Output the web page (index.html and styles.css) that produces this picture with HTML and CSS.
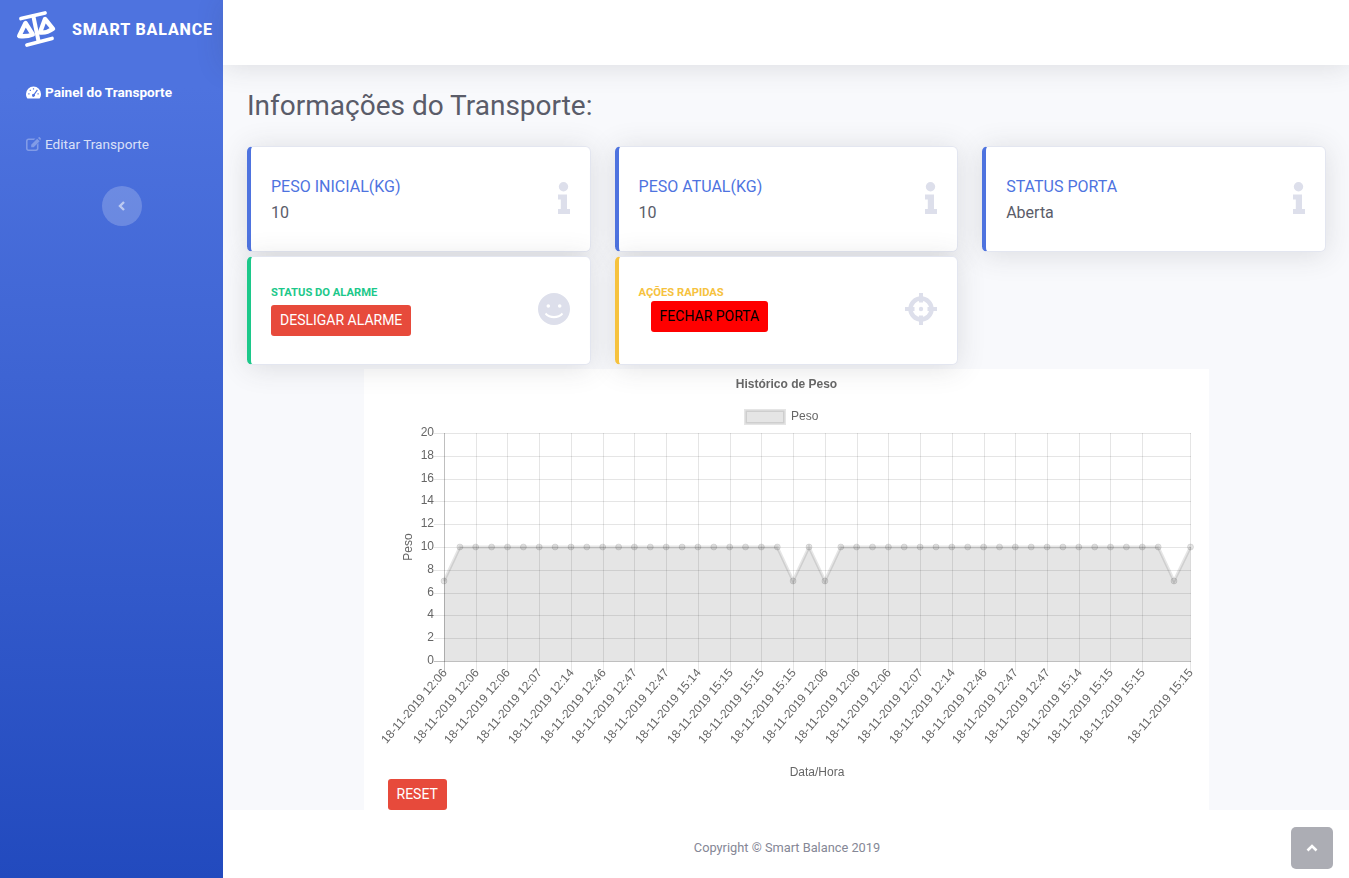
FILE: index.html
```html
<!DOCTYPE html>
<html lang="pt">
<head>
<meta charset="utf-8">
<title>Smart Balance</title>
<link rel="stylesheet" href="styles.css">
</head>
<body>
<aside class="sidebar">
  <a class="brand">
    <svg class="brand-logo" viewBox="16 11 41 38">
      <path class="logo-bar" d="M21 19.500 45 14M27 46 52 39.500"/>
      <path class="logo-stem" d="M33 15.500 38.500 42"/>
      <path class="logo-tri" d="M25.500 24 19.200 37Q27 37.800 32.800 35.500Z"/>
      <path class="logo-tri" d="M45 20 40 33.500Q47 34.200 53 29.800Z"/>
    </svg>
    <span class="brand-text">Smart Balance</span>
  </a>
  <nav class="nav">
    <a class="nav-link active">
      <svg class="nav-icon" viewBox="0 0 15 13"><path fill-rule="evenodd" d="M7.500 0.500A7.500 7.500 0 0 0 0 8C0 9.700 .5 11.200 1.400 12.500H13.600C14.500 11.200 15 9.700 15 8A7.500 7.500 0 0 0 7.500 .5ZM2.300 7.200H3.500V8.400H2.300ZM3.700 3.800H4.900V5H3.700ZM6.900 2.300H8.100V3.500H6.900ZM10.900 3.500 11.900 4.200 8.800 8.600A1.500 1.500 0 1 1 7.800 7.900ZM11.500 7.200H12.700V8.400H11.500Z"/></svg>
      <span>Painel do Transporte</span>
    </a>
    <a class="nav-link">
      <svg class="nav-icon" viewBox="0 0 15 14"><path d="M2.500 1.500H9.500L7.900 3.100H2.500C2 3.100 1.600 3.500 1.600 4V11.500C1.600 12 2 12.400 2.500 12.400H10C10.500 12.400 10.900 12 10.900 11.500V7.700L12.500 6.100V11.500C12.500 12.900 11.400 14 10 14H2.500C1.100 14 0 12.900 0 11.500V4C0 2.600 1.100 1.500 2.500 1.500ZM11.200 1.800 13.700 4.300 7.700 10.300H5.200V7.800ZM12 1 12.600.4C13 0 13.500 0 13.900.4L14.600 1.100C15 1.500 15 2 14.600 2.400L14.500 3.500Z"/></svg>
      <span>Editar Transporte</span>
    </a>
  </nav>
  <button class="toggle" type="button" aria-label="Recolher menu">
    <svg viewBox="0 0 8 10" class="toggle-icon"><path d="M6 1 2 5 6 9"/></svg>
  </button>
</aside>

<div class="main">
  <header class="topbar"></header>
  <main class="content">
    <h1 class="page-title">Informações do Transporte:</h1>
    <section class="cards">
      <article class="card primary">
        <div class="card-text">
          <div class="card-title">Peso Inicial(kg)</div>
          <div class="card-value">10</div>
        </div>
        <svg class="icon-info" viewBox="0 0 12 32"><circle cx="5.500" cy="4.700" r="4.700"/><path d="M0 12.500H9V27H12V32H0V27H2.800V17.500H0Z"/></svg>
      </article>
      <article class="card primary">
        <div class="card-text">
          <div class="card-title">Peso Atual(kg)</div>
          <div class="card-value">10</div>
        </div>
        <svg class="icon-info" viewBox="0 0 12 32"><circle cx="5.500" cy="4.700" r="4.700"/><path d="M0 12.500H9V27H12V32H0V27H2.800V17.500H0Z"/></svg>
      </article>
      <article class="card primary">
        <div class="card-text">
          <div class="card-title">Status Porta</div>
          <div class="card-value">Aberta</div>
        </div>
        <svg class="icon-info" viewBox="0 0 12 32"><circle cx="5.500" cy="4.700" r="4.700"/><path d="M0 12.500H9V27H12V32H0V27H2.800V17.500H0Z"/></svg>
      </article>
      <article class="card success tall">
        <div class="card-text">
          <div class="card-label green">Status do Alarme</div>
          <button class="btn btn-danger alarm-btn" type="button">Desligar Alarme</button>
        </div>
        <svg class="icon-round" viewBox="0 0 32 32"><path fill-rule="evenodd" d="M16 0A16 16 0 1 0 16 32 16 16 0 0 0 16 0ZM10.300 11.200A1.800 1.800 0 1 1 10.300 14.800 1.800 1.800 0 0 1 10.300 11.200ZM21.700 11.200A1.800 1.800 0 1 1 21.700 14.800 1.800 1.800 0 0 1 21.700 11.200ZM8.200 19.700C10 21.800 13 23 16 23S22 21.800 23.800 19.700L25.200 21.200C23 23.800 19.500 25.200 16 25.200S9 23.800 6.800 21.200Z"/></svg>
      </article>
      <article class="card warning tall">
        <div class="card-text">
          <div class="card-label yellow">Ações Rapidas</div>
          <button class="btn door-btn" type="button">Fechar Porta</button>
        </div>
        <svg class="icon-round" viewBox="0 0 32 32"><path class="cross" d="M16 0V9.500M16 22.500V32M0 16H9.500M22.500 16H32"/><circle class="ring" cx="16" cy="16" r="10.500"/><circle cx="16" cy="16" r="2.200"/></svg>
      </article>
    </section>
    <section class="chart-box">
      <svg class="chart" viewBox="364 369 845 410">
        <text class="chart-title" x="786.500" y="388" text-anchor="middle">Histórico de Peso</text>
        <rect class="legend-box" x="745.500" y="410.500" width="39" height="13"/>
        <text class="chart-text" x="791" y="420">Peso</text>

        <path class="grid" d="M434 433.500H1191M434 456.500H1191M434 479.500H1191M434 501.500H1191M434 524.500H1191M434 547.500H1191M434 570.500H1191M434 593.500H1191M434 615.500H1191M434 638.500H1191"/>
        <path class="grid" d="M476.500 433V671M507.500 433V671M539.500 433V671M571.500 433V671M603.500 433V671M634.500 433V671M666.500 433V671M698.500 433V671M730.500 433V671M761.500 433V671M793.500 433V671M825.500 433V671M857.500 433V671M888.500 433V671M920.500 433V671M952.500 433V671M984.500 433V671M1015.500 433V671M1047.500 433V671M1079.500 433V671M1110.500 433V671M1142.500 433V671M1190.500 433V671"/>
        <path class="axis" d="M444.500 433V671M434 661.500H1191"/>

        <path class="area" d="M444 581 459.900 547H777.300L793.100 581 809 547 824.900 581 840.800 547H1158.200L1174 581 1190.500 547V661H444Z"/>
        <path class="line" d="M444 581 459.900 547H777.300L793.100 581 809 547 824.900 581 840.800 547H1158.200L1174 581 1190.500 547"/>
        <g class="points">
          <circle cx="444" cy="581" r="3"/><circle cx="459.900" cy="547" r="3"/><circle cx="475.700" cy="547" r="3"/><circle cx="491.600" cy="547" r="3"/><circle cx="507.500" cy="547" r="3"/><circle cx="523.400" cy="547" r="3"/><circle cx="539.200" cy="547" r="3"/><circle cx="555.100" cy="547" r="3"/>
          <circle cx="571" cy="547" r="3"/><circle cx="586.800" cy="547" r="3"/><circle cx="602.700" cy="547" r="3"/><circle cx="618.600" cy="547" r="3"/><circle cx="634.400" cy="547" r="3"/><circle cx="650.300" cy="547" r="3"/><circle cx="666.200" cy="547" r="3"/><circle cx="682.100" cy="547" r="3"/>
          <circle cx="697.900" cy="547" r="3"/><circle cx="713.800" cy="547" r="3"/><circle cx="729.700" cy="547" r="3"/><circle cx="745.500" cy="547" r="3"/><circle cx="761.400" cy="547" r="3"/><circle cx="777.300" cy="547" r="3"/><circle cx="793.100" cy="581" r="3"/><circle cx="809" cy="547" r="3"/>
          <circle cx="824.900" cy="581" r="3"/><circle cx="840.800" cy="547" r="3"/><circle cx="856.600" cy="547" r="3"/><circle cx="872.500" cy="547" r="3"/><circle cx="888.400" cy="547" r="3"/><circle cx="904.200" cy="547" r="3"/><circle cx="920.100" cy="547" r="3"/><circle cx="936" cy="547" r="3"/>
          <circle cx="951.800" cy="547" r="3"/><circle cx="967.700" cy="547" r="3"/><circle cx="983.600" cy="547" r="3"/><circle cx="999.500" cy="547" r="3"/><circle cx="1015.300" cy="547" r="3"/><circle cx="1031.200" cy="547" r="3"/><circle cx="1047.100" cy="547" r="3"/><circle cx="1062.900" cy="547" r="3"/>
          <circle cx="1078.800" cy="547" r="3"/><circle cx="1094.700" cy="547" r="3"/><circle cx="1110.500" cy="547" r="3"/><circle cx="1126.400" cy="547" r="3"/><circle cx="1142.300" cy="547" r="3"/><circle cx="1158.200" cy="547" r="3"/><circle cx="1174" cy="581" r="3"/><circle cx="1190.500" cy="547" r="3"/>
        </g>

        <g class="chart-text" text-anchor="end">
          <text x="434" y="436">20</text><text x="434" y="459">18</text><text x="434" y="482">16</text><text x="434" y="504">14</text><text x="434" y="527">12</text><text x="434" y="550">10</text><text x="434" y="573">8</text><text x="434" y="596">6</text><text x="434" y="618">4</text><text x="434" y="641">2</text><text x="434" y="664">0</text>
        </g>
        <text class="chart-text" x="412" y="547" text-anchor="middle" transform="rotate(-90 412 547)">Peso</text>
        <text class="chart-text" x="817" y="776" text-anchor="middle">Data/Hora</text>

        <g class="chart-text" text-anchor="end">
          <text transform="translate(447.500 673) rotate(-49.500)">18-11-2019 12:06</text>
          <text transform="translate(479.500 673) rotate(-49.500)">18-11-2019 12:06</text>
          <text transform="translate(510.500 673) rotate(-49.500)">18-11-2019 12:06</text>
          <text transform="translate(542.500 673) rotate(-49.500)">18-11-2019 12:07</text>
          <text transform="translate(574.500 673) rotate(-49.500)">18-11-2019 12:14</text>
          <text transform="translate(606.500 673) rotate(-49.500)">18-11-2019 12:46</text>
          <text transform="translate(637.500 673) rotate(-49.500)">18-11-2019 12:47</text>
          <text transform="translate(669.500 673) rotate(-49.500)">18-11-2019 12:47</text>
          <text transform="translate(701.500 673) rotate(-49.500)">18-11-2019 15:14</text>
          <text transform="translate(733.500 673) rotate(-49.500)">18-11-2019 15:15</text>
          <text transform="translate(764.500 673) rotate(-49.500)">18-11-2019 15:15</text>
          <text transform="translate(796.500 673) rotate(-49.500)">18-11-2019 15:15</text>
          <text transform="translate(828.500 673) rotate(-49.500)">18-11-2019 12:06</text>
          <text transform="translate(860.500 673) rotate(-49.500)">18-11-2019 12:06</text>
          <text transform="translate(891.500 673) rotate(-49.500)">18-11-2019 12:06</text>
          <text transform="translate(923.500 673) rotate(-49.500)">18-11-2019 12:07</text>
          <text transform="translate(955.500 673) rotate(-49.500)">18-11-2019 12:14</text>
          <text transform="translate(987.500 673) rotate(-49.500)">18-11-2019 12:46</text>
          <text transform="translate(1018.500 673) rotate(-49.500)">18-11-2019 12:47</text>
          <text transform="translate(1050.500 673) rotate(-49.500)">18-11-2019 12:47</text>
          <text transform="translate(1082.500 673) rotate(-49.500)">18-11-2019 15:14</text>
          <text transform="translate(1113.500 673) rotate(-49.500)">18-11-2019 15:15</text>
          <text transform="translate(1145.500 673) rotate(-49.500)">18-11-2019 15:15</text>
          <text transform="translate(1193.500 673) rotate(-49.500)">18-11-2019 15:15</text>
        </g>
      </svg>
      <button class="btn btn-danger reset-btn" type="button">Reset</button>
    </section>
  </main>
  <footer class="footer">Copyright © Smart Balance 2019</footer>
</div>
<a class="scroll-top" aria-label="Topo">
  <svg viewBox="0 0 12 8" class="scroll-icon"><path d="M1.500 6.500 6 2 10.500 6.500"/></svg>
</a>
</body>
</html>
```
FILE: styles.css
```css
* { box-sizing: border-box; }
html, body { margin: 0; height: 100%; }
body {
  display: flex;
  min-height: 878px;
  overflow: hidden;
  font-family: Roboto, "Liberation Sans", sans-serif;
  font-size: 16px;
  color: #5a5c69;
  background: #f8f9fc;
}

/* Sidebar */
.sidebar {
  flex: 0 0 223px;
  background: linear-gradient(180deg, #4e73df 10%, #224abe 100%);
  display: flex;
  flex-direction: column;
}
.brand {
  height: 58px;
  display: flex;
  align-items: center;
  padding-left: 16px;
  color: #fff;
}
.brand-logo { width: 41px; height: 38px; margin-right: 15px; }
.logo-bar { fill: none; stroke: #fff; stroke-width: 3.8; stroke-linecap: round; }
.logo-stem { fill: none; stroke: #fff; stroke-width: 4; }
.logo-tri { fill: none; stroke: #fff; stroke-width: 4.4; stroke-linejoin: round; }
.brand-text {
  font-size: 16px;
  font-weight: 800;
  letter-spacing: 0.85px;
  text-transform: uppercase;
  white-space: nowrap;
}
.nav { margin-top: 8px; display: flex; flex-direction: column; }
.nav-link {
  height: 52px;
  padding-left: 26px;
  display: flex;
  align-items: center;
  font-size: 13.6px;
  color: rgba(255, 255, 255, 0.8);
}
.nav-link.active { color: #fff; font-weight: 700; }
.nav-icon { width: 15px; height: 14px; margin-right: 4px; fill: rgba(255, 255, 255, 0.3); }
.nav-link.active .nav-icon { height: 13px; fill: #fff; }
.toggle {
  width: 40px;
  height: 40px;
  margin: 16px 0 0 102px;
  padding: 0;
  border: 0;
  border-radius: 50%;
  background: rgba(255, 255, 255, 0.2);
  display: flex;
  align-items: center;
  justify-content: center;
}
.toggle-icon { width: 8px; height: 10px; fill: none; stroke: rgba(255, 255, 255, 0.55); stroke-width: 2.4; }

/* Main */
.main { flex: 1; min-width: 0; display: flex; flex-direction: column; }
.topbar {
  height: 65px;
  flex: none;
  background: #fff;
  box-shadow: 0 2px 28px rgba(58, 59, 69, 0.15);
  position: relative;
}
.content { flex: 1; padding: 24px 24px 0; }
.page-title {
  margin: 0 0 23px;
  font-size: 28px;
  font-weight: 400;
  line-height: 33.6px;
  color: #5a5c69;
}
.cards {
  display: grid;
  grid-template-columns: repeat(3, 343.7px);
  column-gap: 23.9px;
  row-gap: 4.4px;
}
.card {
  position: relative;
  height: 106px;
  padding: 28px 20px 0;
  display: flex;
  justify-content: space-between;
  background: #fff;
  border: 1px solid #e3e6f0;
  border-left: 4px solid #4e73df;
  border-radius: 5.6px;
  box-shadow: 0 2.4px 28px rgba(58, 59, 69, 0.15);
}
.card.tall { height: 109px; padding-top: 26.6px; }
.card.success { border-left-color: #1cc88a; }
.card.warning { border-left-color: #f6c23e; }
.card-title { font-size: 16px; line-height: 24px; color: #4e73df; text-transform: uppercase; }
.card-value { margin-top: 2px; font-size: 16px; line-height: 24px; }
.card-label { font-size: 11.2px; font-weight: 700; line-height: 17px; text-transform: uppercase; }
.green { color: #1cc88a; }
.yellow { color: #f6c23e; }
.icon-info { width: 12px; height: 32px; flex: none; margin-top: 7.5px; fill: #dddfeb; }
.icon-round { width: 32px; height: 32px; flex: none; margin-top: 9px; fill: #dddfeb; }
.icon-round .cross { fill: none; stroke: #dddfeb; stroke-width: 4; }
.icon-round .ring { fill: none; stroke: #dddfeb; stroke-width: 4.4; }

.btn {
  display: block;
  height: 31px;
  padding: 0 9px;
  border: 0;
  border-radius: 3px;
  font: 400 14px/31px Roboto, "Liberation Sans", sans-serif;
  text-transform: uppercase;
  white-space: nowrap;
}
.btn-danger { background: #e74a3b; color: #fff; }
.alarm-btn { margin-top: 4px; }
.door-btn { margin: 0.5px 0 0 12px; background: #f00; color: #000; }

/* Chart */
.chart-box {
  width: 845px;
  margin: 4px auto 0;
  background: #fff;
}
.chart { display: block; width: 845px; height: 410px; will-change: transform; }
.chart-title { font: 700 12px "Liberation Sans", sans-serif; fill: #666; }
.chart-text { font: 400 12px "Liberation Sans", sans-serif; fill: #666; }
.legend-box { fill: rgba(0, 0, 0, 0.1); stroke: rgba(0, 0, 0, 0.1); stroke-width: 3; }
.grid { fill: none; stroke: rgba(0, 0, 0, 0.1); stroke-width: 1; }
.axis { fill: none; stroke: rgba(0, 0, 0, 0.25); stroke-width: 1; }
.area { fill: rgba(0, 0, 0, 0.1); }
.line { fill: none; stroke: rgba(0, 0, 0, 0.1); stroke-width: 3; }
.points circle { fill: rgba(0, 0, 0, 0.1); stroke: rgba(0, 0, 0, 0.1); stroke-width: 1; }
.reset-btn { margin: 0 0 0 24px; }

/* Footer */
.footer {
  height: 68px;
  flex: none;
  padding: 30px 0 0 2px;
  background: #fff;
  text-align: center;
  font-size: 12.8px;
  line-height: 15px;
  color: #858796;
}
.scroll-top {
  position: fixed;
  right: 16px;
  bottom: 9px;
  width: 42px;
  height: 42px;
  border-radius: 5px;
  background: rgba(90, 92, 105, 0.5);
  display: flex;
  align-items: center;
  justify-content: center;
}
.scroll-icon { width: 12px; height: 8px; fill: none; stroke: #fff; stroke-width: 2.6; }
```
